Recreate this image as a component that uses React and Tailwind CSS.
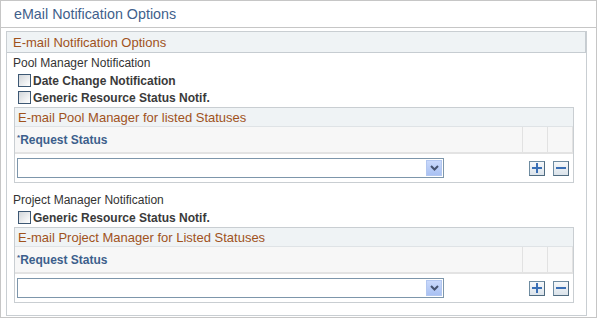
import React from "react";

function Checkbox({ label }) {
  return (
    <div className="flex items-center h-[17px] pl-[11px] gap-[2px]">
      <span className="w-[13px] h-[13px] border border-[#3d5874] bg-linear-to-br from-[#d2d6da] to-white" />
      <span className="text-[12px] font-bold text-[#3a3a3a] leading-none">{label}</span>
    </div>
  );
}

function Dropdown() {
  return (
    <div className="w-[427px] h-[20px] border border-[#7d96ab] bg-white flex items-center justify-end pr-[1px]">
      <div className="w-[16px] h-[16px] bg-linear-to-b from-[#cad9fb] to-[#a9c1f3] border border-[#b3c7f0] flex items-center justify-center">
        <svg width="9" height="6" viewBox="0 0 9 6">
          <polyline points="1,1 4.5,4.5 8,1" fill="none" stroke="#46536f" strokeWidth="2" />
        </svg>
      </div>
    </div>
  );
}

function IconBtn({ plus }) {
  return (
    <div className="w-[16px] h-[15px] border border-[#6f8ca1] border-b-[#4f6b80] border-r-[#4f6b80] bg-linear-to-b from-[#f6f8fa] to-[#dbe3ea] flex items-center justify-center">
      <svg width="10" height="10" viewBox="0 0 10 10">
        <rect x="0" y="4" width="10" height="2" fill="#3a6fb5" />
        {plus && <rect x="4" y="0" width="2" height="10" fill="#3a6fb5" />}
      </svg>
    </div>
  );
}

function Grid({ title }) {
  return (
    <div className="ml-[7px] w-[560px] border border-[#c9ced2] flex flex-col">
      <div className="h-[19px] bg-[#eff3f5] border-b border-[#dfe3e6] flex items-center pl-[3px] text-[13px] text-[#a0521c] leading-none">
        {title}
      </div>
      <div className="h-[27px] bg-[#f7f7f7] border-b-2 border-[#e3e3e3] flex">
        <div className="w-[507px] flex items-center pl-[2px] text-[12px] font-bold text-[#3d5f8c] leading-none">
          <span className="text-[8px] self-center -mt-[4px]">*</span>
          <span>Request Status</span>
        </div>
        <div className="w-[25px] border-l border-[#e2e2e2]" />
        <div className="w-[26px] border-l border-r border-[#e2e2e2]" />
      </div>
      <div className="h-[28px] flex items-center bg-white">
        <div className="w-[507px] pl-[2px] flex items-center">
          <Dropdown />
        </div>
        <div className="w-[25px] pl-[7px] flex items-center">
          <IconBtn plus />
        </div>
        <div className="w-[26px] pl-[6px] flex items-center">
          <IconBtn />
        </div>
      </div>
    </div>
  );
}

export default function App() {
  return (
    <div className="w-[597px] h-[318px] border border-[#c6c6c6] bg-white font-['Liberation_Sans',Arial,sans-serif] flex flex-col overflow-hidden">
      <div className="h-[27px] border-b border-[#c6c6c6] flex items-center pl-[13px] text-[14.3px] text-[#3f5f8c] leading-none shrink-0">
        eMail Notification Options
      </div>
      <div className="mt-[3px] ml-[5px] w-[581px] h-[285px] border border-[#c9ced2] flex flex-col shrink-0">
        <div className="h-[21px] bg-[#eff3f5] border-b border-r border-[#c6ccd1] flex items-center pl-[6px] text-[13px] text-[#a0521c] leading-none shrink-0">
          E-mail Notification Options
        </div>
        <div className="h-[19px] flex items-center pl-[6px] text-[12px] text-[#333] leading-none">
          Pool Manager Notification
        </div>
        <Checkbox label="Date Change Notification" />
        <Checkbox label="Generic Resource Status Notif." />
        <div className="mt-[1px]">
          <Grid title="E-mail Pool Manager for listed Statuses" />
        </div>
        <div className="mt-[7px] h-[19px] flex items-center pl-[6px] text-[12px] text-[#333] leading-none">
          Project Manager Notification
        </div>
        <Checkbox label="Generic Resource Status Notif." />
        <div className="mt-[1px]">
          <Grid title="E-mail Project Manager for Listed Statuses" />
        </div>
      </div>
    </div>
  );
}
